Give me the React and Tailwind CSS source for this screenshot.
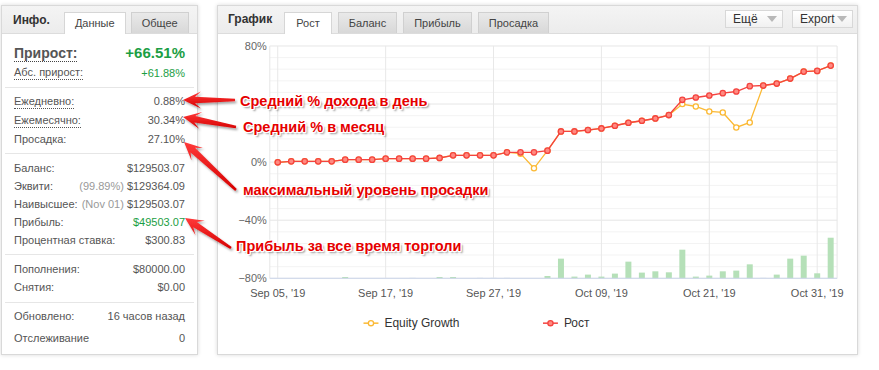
import React from "react";

const FONT = { fontFamily: '"Liberation Sans", Arial, sans-serif' };

const X0 = 277;
const DX = 541 / 40;
const xi = (i) => X0 + i * DX;

const RED = [
  161.7, 160.7, 160.7, 160.7, 160.7, 159, 159, 159, 158, 158, 158, 158, 157.3,
  154.7, 154.7, 154.7, 154.7, 151.7, 151.7, 151.7, 150, 130.7, 130.7, 129.3,
  127.7, 125, 122, 120, 117.7, 114.3, 99, 96.7, 94.7, 92.3, 90.7, 85.3, 84.7,
  82.7, 77.7, 70.7, 70, 64.7,
];
const OVR = { 18: 153, 19: 167.7, 30: 103.3, 31: 105.7, 32: 110.7, 33: 111.7, 34: 126.7, 35: 121.7 };
const ORANGE = RED.map((v, i) => (OVR[i] !== undefined ? OVR[i] : v));

const BARS = [
  [5, 276.7, 0], [10, 277.3, 1], [12, 276.7, 0], [13, 276.7, 0], [15, 277.3, 1], [16, 277.3, 1],
  [17, 277.3, 1], [20, 275.7, 0], [21, 258.3, 0], [22, 276.3, 0], [23, 274.3, 0], [24, 276.3, 0],
  [25, 273.3, 0], [26, 261.3, 0], [27, 272.3, 0], [28, 271, 0], [29, 272, 0], [30, 249.3, 0],
  [31, 276.3, 0], [32, 275.3, 0], [33, 271, 0], [34, 270.3, 0], [35, 264, 0], [36, 277.3, 1],
  [37, 274.3, 0], [38, 258.3, 0], [39, 255.3, 0], [40, 273, 0], [41, 237.3, 0],
];

const XLABELS = [
  [0, "Sep 05, '19"], [8, "Sep 17, '19"], [16, "Sep 27, '19"],
  [24, "Oct 09, '19"], [32, "Oct 21, '19"], [40, "Oct 31, '19"],
];

function Chart() {
  const top = 45, bottom = 278, left = 269, right = 838;
  const step = (bottom - top) / 20;
  const hLines = [];
  for (let k = 0; k <= 20; k++) hLines.push(top + k * step);
  const pts = (arr) => arr.map((v, i) => `${xi(i).toFixed(1)},${v}`).join(" ");
  return (
    <svg width="639" height="321" viewBox="218 33 639 321" className="block" style={FONT}>
      {hLines.map((y, k) => (
        <line key={k} x1={left} x2={right} y1={y} y2={y} stroke={k % 5 === 0 ? "#e6e6e6" : "#f3f3f3"} strokeWidth="1" />
      ))}
      <line x1={left} x2={left} y1={top} y2={bottom} stroke="#e6e6e6" />
      <line x1={right} x2={right} y1={top} y2={bottom} stroke="#e6e6e6" />
      {XLABELS.map(([i]) => (
        <line key={i} x1={xi(i)} x2={xi(i)} y1={top} y2={bottom} stroke="#e8e8e8" />
      ))}
      {BARS.map(([i, t, light]) => (
        <rect key={i} x={xi(i) - 3} y={t} width="6" height={278 - t} fill={light ? "#e6edf3" : "#b5e0b8"} />
      ))}
      <line x1={left} x2={right} y1={bottom} y2={bottom} stroke="#ccd6eb" />
      {[["80%", 45], ["0%", 161], ["\u221240%", 219.5], ["\u221280%", 278]].map(([t, y]) => (
        <text key={t} x="266" y={y + 4} textAnchor="end" fontSize="11" fill="#666">{t}</text>
      ))}
      {XLABELS.map(([i, t]) => (
        <text key={t} x={xi(i)} y="297" textAnchor="middle" fontSize="11" fill="#555">{t}</text>
      ))}
      <polyline points={pts(ORANGE)} fill="none" stroke="#fbb934" strokeWidth="1.3" />
      {ORANGE.map((v, i) => (
        <circle key={i} cx={xi(i)} cy={v} r="2.6" fill="#fff" stroke="#fbb934" strokeWidth="1.3" />
      ))}
      <polyline points={pts(RED)} fill="none" stroke="#f4433f" strokeWidth="1.4" />
      {RED.map((v, i) => (
        <circle key={i} cx={xi(i)} cy={v} r="2.7" fill="#ff8a80" stroke="#f4433f" strokeWidth="1.3" />
      ))}
      <line x1="363" x2="378" y1="323" y2="323" stroke="#fbb934" strokeWidth="1.5" />
      <circle cx="370.5" cy="323" r="2.6" fill="#fff" stroke="#fbb934" strokeWidth="1.3" />
      <text x="384" y="327" fontSize="12" fill="#333">Equity Growth</text>
      <line x1="543" x2="558" y1="323" y2="323" stroke="#f4433f" strokeWidth="1.5" />
      <circle cx="550.5" cy="323" r="2.6" fill="#ff8a80" stroke="#f4433f" strokeWidth="1.3" />
      <text x="564" y="327" fontSize="12" fill="#333">Рост</text>
    </svg>
  );
}

function Row({ label, value, h = "h-[18px]", underline, valueClass = "text-[#555]", extra }) {
  return (
    <div className={`flex items-center justify-between ${h}`}>
      <span className={underline ? "border-b border-dotted border-[#555] leading-[13px]" : ""}>{label}</span>
      <span className={valueClass}>
        {extra ? <span className="text-[#999] mr-[3px]">{extra}</span> : null}
        {value}
      </span>
    </div>
  );
}

function Divider() {
  return <div className="mx-[3px] h-px bg-[#e6e6e6]" />;
}

function LeftPanel() {
  return (
    <div className="w-[197px] h-[350px] border border-[#d9d9d9] bg-white shadow-[0_0_4px_rgba(0,0,0,0.15)] flex flex-col text-[11px] text-[#555]">
      <div className="h-[28px] flex items-end bg-gradient-to-b from-[#f4f4f4] to-[#ececec] border-b border-[#dcdcdc] pl-[11px]">
        <div className="self-center font-bold text-[12px] text-[#333] mr-[14px]">Инфо.</div>
        <div className="h-[22px] px-[10px] flex items-center bg-white border border-b-0 border-[#d6d6d6] -mb-px text-[#444]">Данные</div>
        <div className="ml-[5px] h-[21px] px-[10px] flex items-center bg-gradient-to-b from-[#e9e9e9] to-[#d8d8d8] border border-b-0 border-[#d0d0d0] text-[#444]">Общее</div>
      </div>
      <div className="pt-[8px] pb-[5px] px-[12px]">
        <div className="flex items-center justify-between h-[22px]">
          <span className="text-[14px] font-bold text-[#555] border-b border-dotted border-[#444] leading-[16px]">Прирост:</span>
          <span className="text-[15px] font-bold text-[#1b9e44]">+66.51%</span>
        </div>
        <Row label="Абс. прирост:" value="+61.88%" underline valueClass="text-[#1b9e44]" />
      </div>
      <Divider />
      <div className="pt-[4px] pb-[4px] px-[12px]">
        <Row h="h-[19px]" label="Ежедневно:" value="0.88%" underline />
        <Row h="h-[19px]" label="Ежемесячно:" value="30.34%" underline />
        <Row h="h-[19px]" label="Просадка:" value="27.10%" />
      </div>
      <Divider />
      <div className="pt-[5px] pb-[5px] px-[12px]">
        <Row label="Баланс:" value="$129503.07" />
        <Row label="Эквити:" value="$129364.09" extra="(99.89%)" />
        <Row label="Наивысшее:" value="$129503.07" extra="(Nov 01)" />
        <Row label="Прибыль:" value="$49503.07" valueClass="text-[#1b9e44]" />
        <Row label="Процентная ставка:" value="$300.83" />
      </div>
      <Divider />
      <div className="pt-[5px] pb-[6px] px-[12px]">
        <Row label="Пополнения:" value="$80000.00" />
        <Row label="Снятия:" value="$0.00" />
      </div>
      <Divider />
      <div className="pt-[2px] px-[12px]">
        <Row h="h-[22px]" label="Обновлено:" value="16 часов назад" />
        <Row h="h-[23px]" label="Отслеживание" value="0" />
      </div>
    </div>
  );
}

function Tab({ children, active }) {
  return active ? (
    <div className="h-[22px] px-[11px] flex items-center bg-white border border-b-0 border-[#d6d6d6] -mb-px text-[#444]">{children}</div>
  ) : (
    <div className="h-[21px] px-[10px] flex items-center bg-gradient-to-b from-[#e9e9e9] to-[#d8d8d8] border border-b-0 border-[#d0d0d0] text-[#444]">{children}</div>
  );
}

function DropBtn({ label, w }) {
  return (
    <div className={`${w} h-[18px] flex items-center justify-between pl-[7px] pr-[4px] border border-[#d8d8d8] bg-gradient-to-b from-white to-[#f1f1f1] text-[12px] text-[#333]`}>
      <span>{label}</span>
      <svg width="12" height="8" viewBox="0 0 12 8"><path d="M1 1 L11 1 L6 7 Z" fill="#b8b8b8" /></svg>
    </div>
  );
}

function RightPanel() {
  return (
    <div className="w-[641px] h-[350px] border border-[#d9d9d9] bg-white shadow-[0_0_4px_rgba(0,0,0,0.15)] flex flex-col text-[11px]">
      <div className="h-[28px] flex items-end bg-gradient-to-b from-[#f4f4f4] to-[#ececec] border-b border-[#dcdcdc] pl-[10px] pr-[4px]">
        <div className="self-center font-bold text-[12px] text-[#333] mr-[12px]">График</div>
        <div className="flex items-end gap-[6px]">
          <Tab active>Рост</Tab>
          <Tab>Баланс</Tab>
          <Tab>Прибыль</Tab>
          <Tab>Просадка</Tab>
        </div>
        <div className="ml-auto self-start mt-[4px] flex gap-[9px]">
          <DropBtn label="Ещё" w="w-[58px]" />
          <DropBtn label="Export" w="w-[61px]" />
        </div>
      </div>
      <Chart />
    </div>
  );
}

function arrowPts(x1, y1, x2, y2) {
  const L = Math.hypot(x2 - x1, y2 - y1);
  const ux = (x2 - x1) / L, uy = (y2 - y1) / L;
  const nx = -uy, ny = ux;
  const at = (d, w) => `${(x1 + ux * d + nx * w).toFixed(1)},${(y1 + uy * d + ny * w).toFixed(1)}`;
  return [at(0, 1.2), at(L - 12, 3.2), at(L - 18, 8.5), `${x2},${y2}`, at(L - 18, -8.5), at(L - 12, -3.2), at(0, -1.2)].join(" ");
}

const ARROWS = [
  [235, 100, 183, 100],
  [236, 127, 183, 117],
  [236, 190, 184, 142],
  [231, 248, 185, 218],
];

const ANN = [
  ["Средний % дохода в день", 240, 100.5],
  ["Средний % в месяц", 243, 127],
  ["максимальный уровень просадки", 243, 190],
  ["Прибыль за все время торголи", 236, 246],
];

function Annotations() {
  return (
    <>
      <svg className="absolute left-0 top-0 pointer-events-none" width="879" height="370" viewBox="0 0 879 370">
        <defs>
          <filter id="sh" x="-20%" y="-20%" width="140%" height="140%">
            <feDropShadow dx="1.5" dy="2" stdDeviation="1.2" floodColor="#000" floodOpacity="0.35" />
          </filter>
          <linearGradient id="rg" x1="0" y1="0" x2="0" y2="1">
            <stop offset="0" stopColor="#ff3a3a" />
            <stop offset="1" stopColor="#d60000" />
          </linearGradient>
        </defs>
        {ARROWS.map((a, i) => (
          <polygon key={i} points={arrowPts(...a)} fill="url(#rg)" filter="url(#sh)" />
        ))}
      </svg>
      {ANN.map(([t, x, y]) => (
        <div
          key={t}
          className="absolute whitespace-nowrap font-bold text-[14.5px] leading-[16px] text-[#e60000] [text-shadow:1px_0_0_#fff,-1px_0_0_#fff,0_1px_0_#fff,0_-1px_0_#fff,1px_1px_0_#fff,-1px_-1px_0_#fff,1px_-1px_0_#fff,-1px_1px_0_#fff,2px_2px_2px_rgba(0,0,0,0.45)]"
          style={{ left: x, top: y - 8, ...FONT }}
        >
          {t}
        </div>
      ))}
    </>
  );
}

export default function App() {
  return (
    <div className="relative w-[879px] h-[370px] bg-white overflow-hidden" style={FONT}>
      <div className="flex gap-[19px] pt-[5px] pl-[1px]">
        <LeftPanel />
        <RightPanel />
      </div>
      <Annotations />
    </div>
  );
}
